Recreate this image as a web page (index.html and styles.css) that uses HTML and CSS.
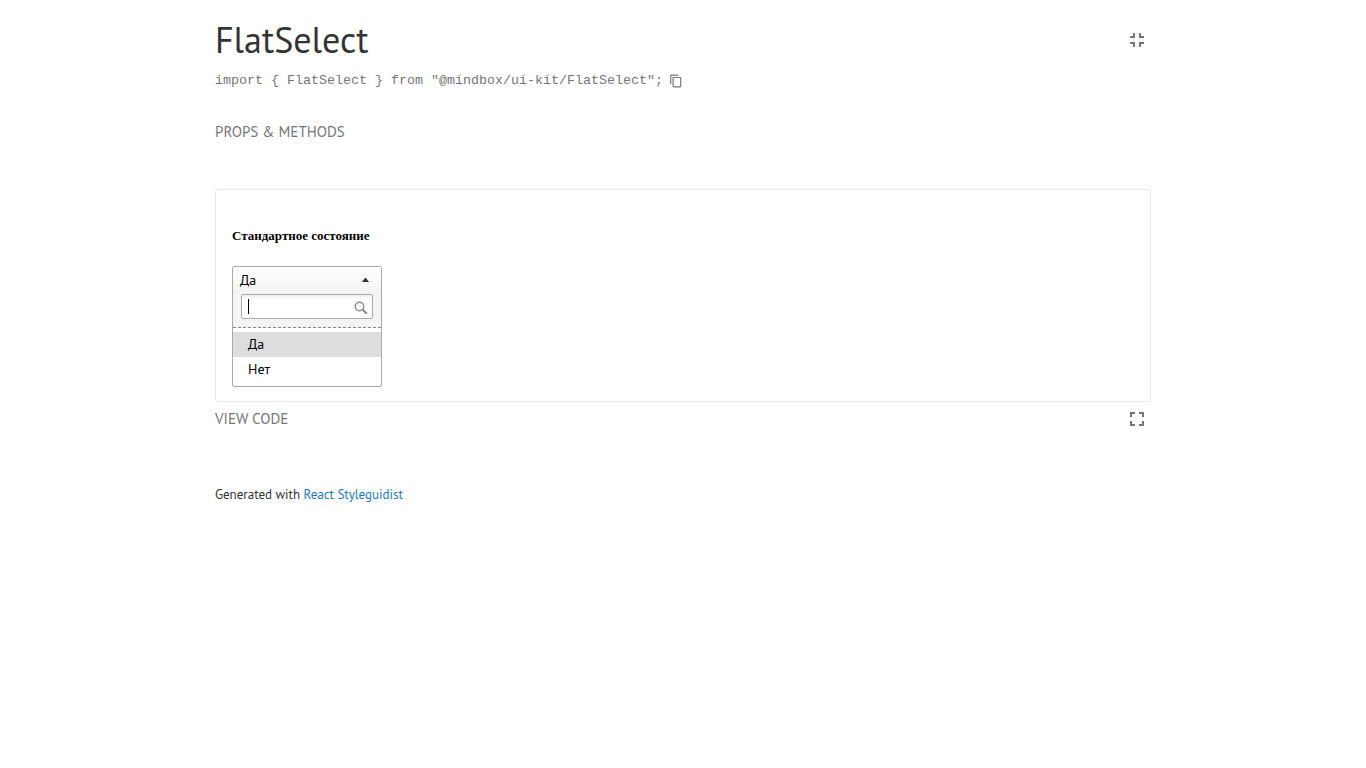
FILE: index.html
```html
<!DOCTYPE html>
<html lang="en">
<head>
<meta charset="utf-8">
<title>FlatSelect</title>
<link rel="stylesheet" href="styles.css">
</head>
<body>
<main class="page">
  <header class="heading">
    <h1 class="title">FlatSelect</h1>
    <a class="tool" href="#all" aria-label="Show all components">
      <svg class="icon" viewBox="0 0 24 24"><path d="M5 16h3v3h2v-5H5v2zm3-8H5v2h5V5H8v3zm6 11h2v-3h3v-2h-5v5zm2-11V5h-2v5h5V8h-3z"/></svg>
    </a>
  </header>
  <div class="path">
    <code class="import">import { FlatSelect } from "@mindbox/ui-kit/FlatSelect";</code>
    <button class="copy" type="button" aria-label="Copy to clipboard">
      <svg class="copy-icon" viewBox="0 0 24 24"><path d="M16 1H4c-1.1 0-2 .9-2 2v14h2V3h12V1zm3 4H8c-1.1 0-2 .9-2 2v14c0 1.100.9 2 2 2h11c1.100 0 2-.9 2-2V7c0-1.100-.9-2-2-2zm0 16H8V7h11v14z"/></svg>
    </button>
  </div>
  <button class="tab" type="button">PROPS &amp; METHODS</button>

  <section class="preview">
    <h5 class="caption">Стандартное состояние</h5>
    <div class="select">
      <button class="choice" type="button" aria-expanded="true">
        <span>Да</span>
        <svg class="arrow" viewBox="0 0 7 4"><path d="M0 4 3 0h1l3 4z"/></svg>
      </button>
      <div class="search">
        <input class="search-input" type="text" aria-label="Search">
        <span class="caret"></span>
        <svg class="lens" viewBox="0 0 14 14"><circle cx="5.500" cy="5.500" r="4.300"/><path class="handle" d="m9 9 3.300 3.300"/></svg>
      </div>
      <ul class="options" role="listbox" aria-label="Options">
        <li class="option selected" role="option" aria-selected="true">Да</li>
        <li class="option" role="option" aria-selected="false">Нет</li>
      </ul>
    </div>
  </section>
  <div class="controls">
    <button class="tab" type="button">VIEW CODE</button>
    <a class="tool" href="#isolated" aria-label="Open isolated">
      <svg class="icon" viewBox="0 0 24 24"><path d="M7 14H5v5h5v-2H7v-3zm-2-4h2V7h3V5H5v5zm12 7h-3v2h5v-5h-2v3zM14 5v2h3v3h2V5h-5z"/></svg>
    </a>
  </div>
  <footer class="footer">Generated with <a class="link" href="#styleguidist">React Styleguidist</a></footer>
</main>
</body>
</html>
```
FILE: styles.css
```css
* { box-sizing: border-box; }
body {
  margin: 0;
  background: #fff;
  color: #333;
  font-family: "PT Sans", "Noto Sans", sans-serif;
}
button {
  padding: 0;
  border: 0;
  background: none;
  font-family: inherit;
  cursor: pointer;
}
.page {
  max-width: 1000px;
  margin: 0 auto;
  padding: 16px 32px;
}
.heading, .controls {
  display: flex;
  align-items: center;
  justify-content: space-between;
}
.title {
  margin: 0;
  font-size: 36px;
  font-weight: 400;
  line-height: 48px;
}
.tool {
  display: flex;
  padding-right: 2px;
}
.icon {
  width: 24px;
  height: 24px;
  fill: #767676;
}
.path {
  display: flex;
  align-items: center;
  gap: 6px;
  height: 34px;
  color: #767676;
}
.import {
  font-family: "Liberation Mono", monospace;
  font-size: smaller;
  line-height: 20px;
}
.copy { display: flex; }
.copy-icon {
  width: 14px;
  height: 14px;
  fill: #767676;
}
.tab {
  display: block;
  color: #767676;
  font-size: 15px;
  line-height: 20px;
}
.path + .tab { margin: 24px 0 47px; }
.preview {
  padding: 36px 16px 14px;
  border: 1px solid #e8e8e8;
  border-radius: 3px;
}
.caption {
  margin: 0 0 20px;
  color: #000;
  font: bold 13px/20px "Liberation Serif", serif;
}
.select {
  width: 150px;
  border: 1px solid #aaa;
  border-radius: 2px;
  background: #fff;
  color: #000;
  font-size: 14px;
}
.choice {
  display: flex;
  align-items: center;
  justify-content: space-between;
  width: 100%;
  height: 27px;
  padding: 0 12px 2px 7px;
  background: linear-gradient(#fff, #f3f3f3);
  color: #000;
  font-size: 14px;
}
.arrow {
  width: 7px;
  height: 4px;
  fill: #333;
}
.search {
  position: relative;
  padding: 0 8px 8px;
  border-bottom: 1px dashed #888;
  background: #f4f4f4;
}
.search-input {
  display: block;
  width: 100%;
  height: 25px;
  padding: 0 24px 0 6px;
  border: 1px solid #aaa;
  border-radius: 2px;
  outline: 0;
  background: linear-gradient(#eee, #fff 4px);
  font: inherit;
  caret-color: transparent;
}
.caret {
  position: absolute;
  top: 5px;
  left: 15px;
  width: 1px;
  height: 15px;
  background: #000;
}
.lens {
  position: absolute;
  top: 7px;
  right: 13px;
  width: 14px;
  height: 14px;
  fill: none;
  stroke: #8c8c8c;
  stroke-width: 1.4;
}
.handle {
  stroke: #888;
  stroke-width: 2;
  stroke-linecap: round;
}
.options {
  margin: 0;
  padding: 4px 0;
  list-style: none;
}
.option {
  padding: 0 15px;
  line-height: 25px;
}
.selected { background: #ddd; }
.controls { padding-top: 5px; }
.footer {
  margin-top: 54px;
  font-size: 13px;
  line-height: 20px;
}
.link {
  color: #1978c8;
  text-decoration: none;
}
```
